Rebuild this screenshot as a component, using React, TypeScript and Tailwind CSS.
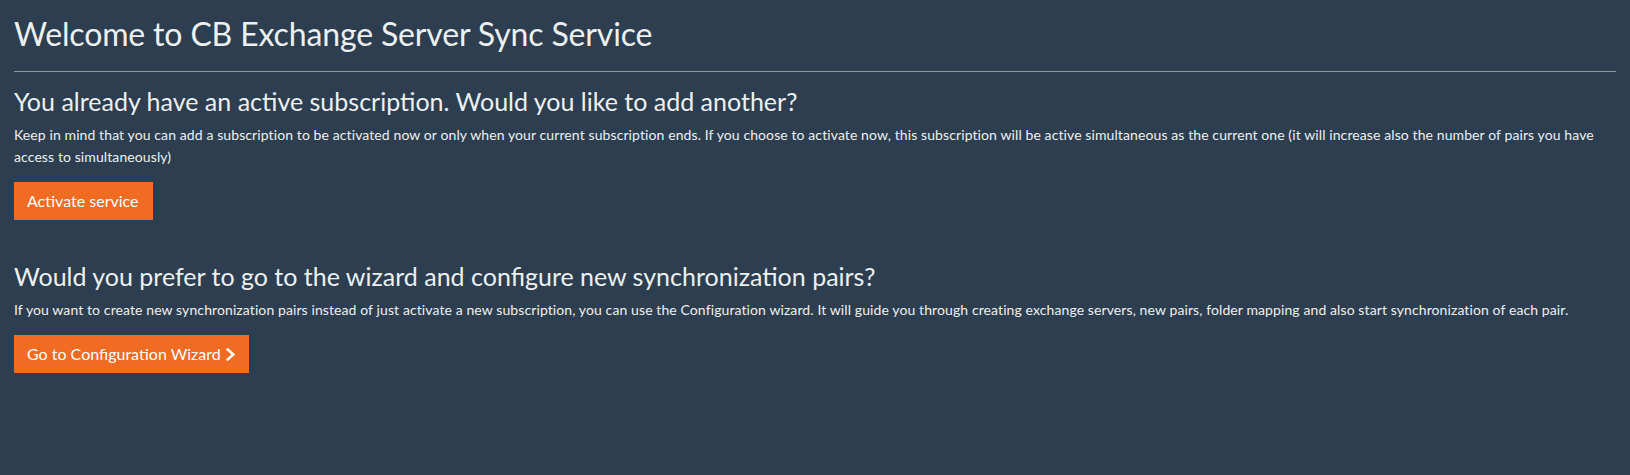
function Chevron() {
  return (
    <svg
      viewBox="25 37 270 438"
      width="9"
      height="13"
      preserveAspectRatio="none"
      className="ml-[5px] fill-current"
    >
      <path d="M285.476 272.971L91.132 467.314c-9.373 9.373-24.569 9.373-33.941 0l-22.667-22.667c-9.357-9.357-9.375-24.522-.04-33.901L188.505 256 34.484 101.255c-9.335-9.379-9.317-24.544.04-33.901l22.667-22.667c9.373-9.373 24.569-9.373 33.941 0L285.475 239.03c9.373 9.372 9.373 24.568.001 33.941z" />
    </svg>
  );
}

function Section({
  title,
  text,
  children,
}: {
  title: string;
  text: string;
  children: React.ReactNode;
}) {
  return (
    <section>
      <h3 className="mb-[8px] text-[25px] leading-[30px] font-normal">{title}</h3>
      <p className="mb-[14px] text-[14px] leading-[22px] tracking-[0.1px]">{text}</p>
      <div className="flex">{children}</div>
    </section>
  );
}

function OrangeButton({ children }: { children: React.ReactNode }) {
  return (
    <button
      type="button"
      className="flex h-[38px] items-center bg-[#f26b22] pr-[14px] pl-[13px] text-[16px] leading-[20px] text-white"
    >
      {children}
    </button>
  );
}

export default function App() {
  return (
    <div
      className="min-h-[475px] bg-[#2c3e50] px-[14px] pb-8 text-[#ecf0f1]"
      style={{ fontFamily: 'Lato, "Noto Sans", sans-serif' }}
    >
      <h1 className="pt-[14px] pb-[17px] text-[32px] leading-[40px] font-normal tracking-[-0.15px]">
        Welcome to CB Exchange Server Sync Service
      </h1>
      <hr className="mb-[14px] border-0 border-t border-[#8e969e]" />

      <Section
        title="You already have an active subscription. Would you like to add another?"
        text="Keep in mind that you can add a subscription to be activated now or only when your current subscription ends. If you choose to activate now, this subscription will be active simultaneous as the current one (it will increase also the number of pairs you have access to simultaneously)"
      >
        <OrangeButton>Activate service</OrangeButton>
      </Section>

      <div className="h-[41px]" />

      <Section
        title="Would you prefer to go to the wizard and configure new synchronization pairs?"
        text="If you want to create new synchronization pairs instead of just activate a new subscription, you can use the Configuration wizard. It will guide you through creating exchange servers, new pairs, folder mapping and also start synchronization of each pair."
      >
        <OrangeButton>
          Go to Configuration Wizard
          <Chevron />
        </OrangeButton>
      </Section>
    </div>
  );
}
